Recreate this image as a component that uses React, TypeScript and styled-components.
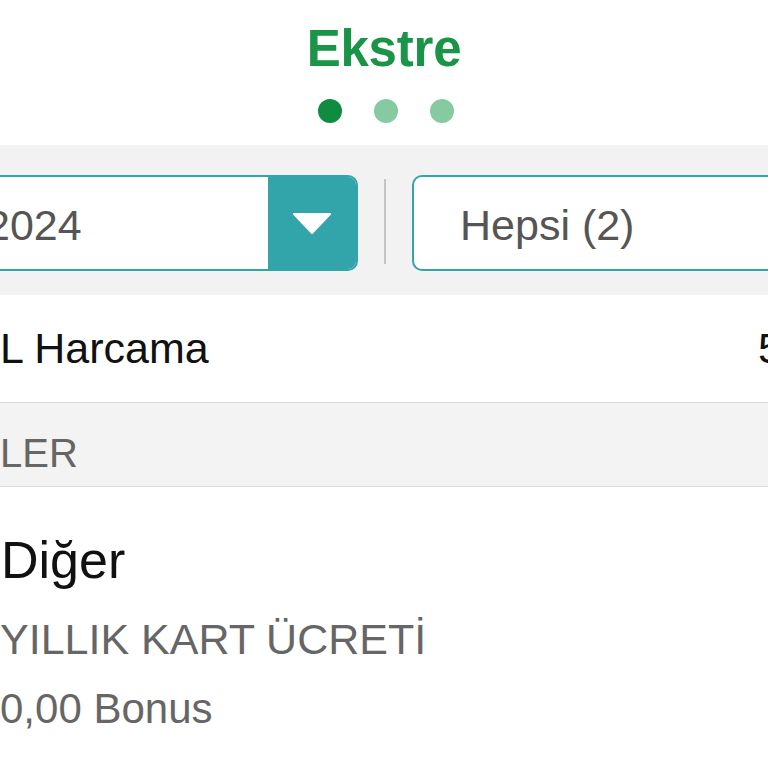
import React from 'react';
import styled, { createGlobalStyle } from 'styled-components';

const GlobalStyle = createGlobalStyle`
  html, body {
    margin: 0;
    padding: 0;
    width: 768px;
    height: 768px;
    overflow: hidden;
    background: #ffffff;
    font-family: 'Liberation Sans', Arial, Helvetica, sans-serif;
  }
`;

const Screen = styled.div`
  width: 768px;
  height: 768px;
  overflow: hidden;
  display: flex;
  flex-direction: column;
  background: #ffffff;
`;

const Header = styled.header`
  display: flex;
  flex-direction: column;
  align-items: center;
  padding: 19px 0 22px;
`;

const Title = styled.h1`
  margin: 0;
  font-size: 51px;
  line-height: 60px;
  font-weight: 700;
  color: #1a9447;
  letter-spacing: -0.2px;
`;

const Dots = styled.div`
  display: flex;
  gap: 32px;
  margin-top: 20px;
  margin-left: 4px;
`;

const Dot = styled.span<{ $active?: boolean }>`
  width: 24px;
  height: 24px;
  border-radius: 50%;
  background: ${(p) => (p.$active ? '#0f8c3f' : '#86caa1')};
`;

const FilterBand = styled.div`
  display: flex;
  align-items: flex-start;
  height: 150px;
  box-sizing: border-box;
  padding-top: 30px;
  background: #f2f2f2;
`;

const SelectBox = styled.div<{ $side: 'left' | 'right' }>`
  display: flex;
  align-items: stretch;
  height: 96px;
  box-sizing: border-box;
  border: 2.5px solid #31a5aa;
  border-radius: 10px;
  background: #ffffff;
  overflow: hidden;
  ${(p) =>
    p.$side === 'left'
      ? 'width: 398px; margin-left: -40px; flex: none;'
      : 'flex: 1; margin-right: -40px;'}
`;

const SelectText = styled.div<{ $indent: number }>`
  flex: 1;
  display: flex;
  align-items: center;
  padding: 4px 0 0 ${(p) => p.$indent}px;
  font-size: 43px;
  line-height: 60px;
  color: #555555;
  white-space: nowrap;
`;

const DropButton = styled.div`
  width: 88px;
  flex: none;
  display: flex;
  align-items: center;
  justify-content: center;
  background: #31a5aa;
`;

const Divider = styled.span`
  width: 2px;
  height: 85px;
  margin: 4px 26px 0;
  background: #c4c4c4;
  flex: none;
`;

const SummaryRow = styled.div`
  display: flex;
  justify-content: space-between;
  height: 108px;
  box-sizing: border-box;
  padding-top: 23px;
  border-bottom: 1px solid #d8d8d8;
  font-size: 43px;
  line-height: 60px;
  color: #111111;
  white-space: nowrap;
`;

const Amount = styled.span`
  margin-right: -14px;
`;

const SectionHeader = styled.div`
  height: 84px;
  box-sizing: border-box;
  padding-top: 20px;
  background: #f3f3f3;
  border-bottom: 1px solid #dadada;
  font-size: 40px;
  line-height: 60px;
  color: #666666;
`;

const Item = styled.div`
  display: flex;
  flex-direction: column;
  padding-top: 43px;
`;

const ItemTitle = styled.div`
  font-size: 52px;
  line-height: 60px;
  padding-left: 1px;
  color: #111111;
`;

const ItemLine = styled.div<{ $gap: number; $size: number }>`
  margin-top: ${(p) => p.$gap}px;
  font-size: ${(p) => p.$size}px;
  line-height: 60px;
  color: #666666;
  white-space: nowrap;
`;

function Caret() {
  return (
    <svg width="40" height="21" viewBox="0 0 40 21">
      <path d="M2 1 H38 L20 20 Z" fill="#ffffff" stroke="#ffffff" strokeWidth="2" strokeLinejoin="round" />
    </svg>
  );
}

export default function App() {
  return (
    <Screen>
      <GlobalStyle />
      <Header>
        <Title>Ekstre</Title>
        <Dots>
          <Dot $active />
          <Dot />
          <Dot />
        </Dots>
      </Header>

      <FilterBand>
        <SelectBox $side="left">
          <SelectText $indent={24}>2024</SelectText>
          <DropButton>
            <Caret />
          </DropButton>
        </SelectBox>
        <Divider />
        <SelectBox $side="right">
          <SelectText $indent={46}>Hepsi (2)</SelectText>
        </SelectBox>
      </FilterBand>

      <SummaryRow>
        <span>L Harcama</span>
        <Amount>5</Amount>
      </SummaryRow>

      <SectionHeader>LER</SectionHeader>

      <Item>
        <ItemTitle>Diğer</ItemTitle>
        <ItemLine $gap={19} $size={43}>YILLIK KART ÜCRETİ</ItemLine>
        <ItemLine $gap={10} $size={42}>0,00 Bonus</ItemLine>
      </Item>
    </Screen>
  );
}
